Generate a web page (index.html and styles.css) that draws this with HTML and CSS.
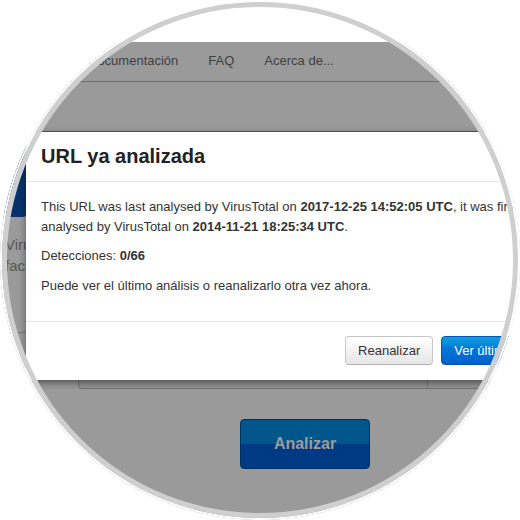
FILE: index.html
```html
<!DOCTYPE html>
<html lang="es">
<head>
    <meta charset="utf-8">
    <title>URL ya analizada</title>
    <link rel="stylesheet" href="styles.css">
</head>
<body>
    <div class="lens">
        <div class="topgap"></div>
        <div class="navbar">
            <a>Documentación</a>
            <a>FAQ</a>
            <a>Acerca de...</a>
        </div>
        <div class="stage">
            <div class="hero">
                <div class="side">
                    <div class="brand"></div>
                    <div class="tag">Virus<br>facil</div>
                    <div class="rule"></div>
                </div>
            </div>
            <div class="search">
                <div class="field"></div>
                <div class="pick"></div>
            </div>
            <div class="go">Analizar</div>
        </div>

        <div class="modal">
            <div class="modal-header">
                <h3>URL ya analizada</h3>
            </div>
            <div class="modal-body">
                <p>This URL was last analysed by VirusTotal on <b>2017-12-25 14:52:05 UTC</b>, it was first analysed by VirusTotal on <b>2014-11-21 18:25:34 UTC</b>.</p>
                <p>Detecciones: <b>0/66</b></p>
                <p>Puede ver el último análisis o reanalizarlo otra vez ahora.</p>
            </div>
            <div class="modal-footer">
                <a class="btn">Reanalizar</a>
                <a class="btn btn-primary">Ver último análisis</a>
            </div>
        </div>
    </div>
</body>
</html>
```

FILE: styles.css
```css
body { margin: 0; background: #fff; font-family: "Liberation Sans", Arial, sans-serif; }

.lens { position: relative; width: 520px; height: 520px; border-radius: 50%; overflow: hidden; background: #fff; }
.lens::after { content: ""; position: absolute; top: 2px; left: 2px; right: 2px; bottom: 2px; border-radius: 50%; border: 5px solid #cfcfcf; box-shadow: 0 0 0 3px #fff; z-index: 3; }

.topgap { height: 42px; }
.navbar { display: flex; height: 39px; padding-left: 73px; background: #9a9a9a; border-bottom: 1px solid #6d6d6d; }
.navbar a { padding: 0 15px; line-height: 37px; font-size: 13px; color: #3e3e3e; }

.stage { height: 438px; background: #9a9a9a; }
.hero { display: flex; padding-top: 49px; }
.side { width: 26px; }
.brand { height: 86px; background: #07336a; border-bottom-right-radius: 3px; }
.tag { margin-top: 17px; padding-left: 5px; font-size: 15px; line-height: 21px; color: #565656; white-space: nowrap; }
.rule { margin-top: 56px; border-top: 1px solid #7a7a7a; }

.search { display: flex; height: 41px; margin: 13px 0 0 78px; border: 1px solid #707070; border-radius: 4px; background: #949494; }
.field { width: 348px; }
.pick { flex: 1; border-left: 1px solid #777; }

.go { width: 128px; height: 48px; margin: 30px 0 0 240px; border: 1px solid #00305e; border-radius: 4px; background: linear-gradient(#00558a 50%, #003a84 50%); color: #9c9c9c; font-size: 16px; font-weight: bold; line-height: 48px; text-align: center; }

.modal { position: absolute; top: 131px; left: 26px; width: 561px; background: #fff; border-top: 1px solid #505050; border-radius: 6px; box-shadow: 0 3px 7px rgba(0, 0, 0, 0.45); z-index: 1; font-size: 13px; color: #333; }
.modal-header { padding: 9px 15px 10px; border-bottom: 1px solid #e5e5e5; }
.modal-header h3 { margin: 0; font-size: 20px; line-height: 30px; color: #222; }
.modal-body { padding: 15px 15px 16px; }
.modal-body p { margin: 0 0 10px; line-height: 19.5px; }
.modal-footer { display: flex; justify-content: flex-end; gap: 8px; padding: 14px 15px 15px; border-top: 1px solid #e5e5e5; }

.btn { display: inline-block; padding: 0 12px; height: 27px; line-height: 27px; font-size: 13px; color: #333; border: 1px solid #c6c6c6; border-bottom-color: #b3b3b3; border-radius: 4px; background: linear-gradient(#fff, #e6e6e6); }
.btn-primary { color: #fff; border-color: #0055b3; background: linear-gradient(#0ea0de, #0072d8 50%, #0062cc); }
```
